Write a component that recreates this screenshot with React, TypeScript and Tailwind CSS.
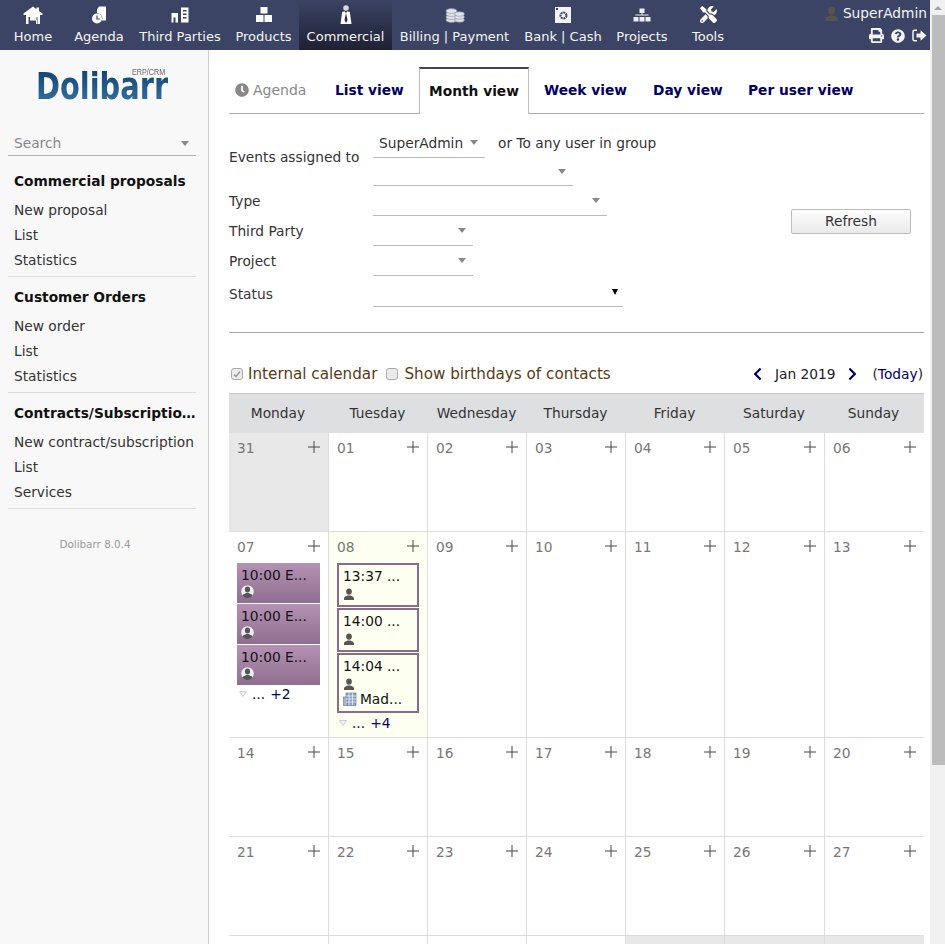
import { FaPrint, FaQuestionCircle, FaClock, FaTools, FaChevronLeft, FaChevronRight } from "react-icons/fa"

const font = { fontFamily: "'DejaVu Sans', sans-serif" }

function HomeIcon() {
  return (
    <svg width="20" height="18" viewBox="0 0 20 18" fill="#fff">
      <path d="M10 0.5 L0.5 7.5 V9 H19.5 V7.5 L16 5 V1.5 H13.5 V3.2 Z" />
      <path fillRule="evenodd" d="M3 9 H17 V18 H14.5 V11 H6 V11 H5.5 V18 H3 Z" />
      <rect x="7" y="11" width="6.5" height="3.5" />
      <rect x="13" y="14" width="1" height="4" />
    </svg>
  )
}

function AgendaIcon() {
  return (
    <svg width="16" height="18" viewBox="0 0 16 18" fill="#fff">
      <path d="M6 3.5 L8 0.5 H15 V14.5 H11 A5.5 5.5 0 0 0 6 7 Z" />
      <circle cx="6" cy="12.5" r="5" />
      <path d="M6 9.5 V13 H9" stroke="#3b4465" strokeWidth="1.2" fill="none" />
    </svg>
  )
}

function PartiesIcon() {
  return (
    <svg width="18" height="16" viewBox="0 0 18 16" fill="#fff">
      <path d="M0.5 6 H7 V15.5 H0.5 Z M2.5 10.5 V15.5 H4.5 V10.5 Z" fillRule="evenodd" />
      <path d="M10 0.5 H17.5 V15.5 H10 Z M12 3 V4.5 H15.5 V3 Z M12 6.5 V8 H15.5 V6.5 Z M12 10 V11.5 H15.5 V10 Z" fillRule="evenodd" />
    </svg>
  )
}

function ProductsIcon() {
  return (
    <svg width="18" height="17" viewBox="0 0 18 17" fill="#fff">
      <rect x="5.5" y="1" width="7" height="6.5" />
      <rect x="1" y="9" width="7.5" height="7" />
      <rect x="9.5" y="9" width="7.5" height="7" />
    </svg>
  )
}

function TieIcon() {
  return (
    <svg width="12" height="20" viewBox="0 0 12 20" fill="#fff">
      <circle cx="6" cy="3" r="2.8" fill="#d8d8d8" />
      <path d="M2.2 7 L4.5 6.2 L6 8 L7.5 6.2 L9.8 7 L11.5 19 H0.5 Z" />
      <path d="M6 8 L7.5 15 L6 18 L4.5 15 Z" fill="#2a2d45" />
    </svg>
  )
}

function CoinsIcon() {
  return (
    <svg width="20" height="16" viewBox="0 0 20 16" fill="#e2e4ea" stroke="#8a8fa5" strokeWidth="0.7">
      <ellipse cx="6.5" cy="13" rx="5.5" ry="2.4" />
      <ellipse cx="6.5" cy="10" rx="5.5" ry="2.4" />
      <ellipse cx="6.5" cy="7" rx="5.5" ry="2.4" />
      <ellipse cx="6.5" cy="4" rx="5.5" ry="2.4" />
      <ellipse cx="14.5" cy="13" rx="4.8" ry="2.2" />
      <ellipse cx="14.5" cy="10" rx="4.8" ry="2.2" />
      <ellipse cx="14.5" cy="7" rx="4.8" ry="2.2" />
    </svg>
  )
}

function SafeIcon() {
  return (
    <svg width="16" height="16" viewBox="0 0 16 16">
      <rect width="16" height="16" fill="#f2f3f7" />
      <circle cx="8.5" cy="8.5" r="3" fill="none" stroke="#3b4465" strokeWidth="2" strokeDasharray="2 0.7" />
      <rect x="1" y="1" width="2" height="2" fill="#3b4465" />
    </svg>
  )
}

function TreeIcon() {
  return (
    <svg width="18" height="14" viewBox="0 0 18 14" fill="#eceef3">
      <rect x="6.5" y="0.5" width="5" height="4.5" />
      <rect x="8.5" y="5" width="1" height="2" />
      <rect x="2.5" y="6.5" width="13" height="1" />
      <rect x="0.5" y="9" width="5" height="4.5" />
      <rect x="6.5" y="9" width="5" height="4.5" />
      <rect x="12.5" y="9" width="5" height="4.5" />
    </svg>
  )
}

function ExitIcon() {
  return (
    <svg width="15" height="13" viewBox="0 0 15 13" fill="#f4f4f4">
      <path d="M5 1.2 H2.5 A1.5 1.5 0 0 0 1 2.7 V10.3 A1.5 1.5 0 0 0 2.5 11.8 H5" fill="none" stroke="#f4f4f4" strokeWidth="1.5" />
      <path d="M4.5 4.5 H8.5 V1.2 L14.5 6.5 L8.5 11.8 V8.5 H4.5 Z" />
    </svg>
  )
}

function PersonIcon({ size = 12, color = "#555" }: { size?: number; color?: string }) {
  return (
    <svg width={size} height={size} viewBox="0 0 12 12" fill={color}>
      <ellipse cx="6" cy="3.6" rx="2.8" ry="3.2" />
      <path d="M1 12 V10.5 C1 8.8 3.5 8.2 4.6 7.6 H7.4 C8.5 8.2 11 8.8 11 10.5 V12 Z" />
    </svg>
  )
}

function PersonRound() {
  return (
    <svg width="13" height="13" viewBox="0 0 13 13">
      <circle cx="6.5" cy="6.5" r="6.3" fill="#eee" />
      <ellipse cx="6.5" cy="4.6" rx="2.6" ry="3" fill="#555" />
      <path d="M1.4 10.5 C2 9 4.4 8.6 5.2 8 H7.8 C8.6 8.6 11 9 11.6 10.5 A6.3 6.3 0 0 1 1.4 10.5 Z" fill="#555" />
    </svg>
  )
}

function BuildingIcon() {
  return (
    <svg width="14" height="14" viewBox="0 0 14 14">
      <rect x="3" y="1" width="10" height="12.5" fill="#8fa3c4" stroke="#5f7090" strokeWidth="0.6" />
      <rect x="0.5" y="5" width="4" height="8.5" fill="#a6b6d0" stroke="#5f7090" strokeWidth="0.6" />
      <path d="M3 4 H13 M3 7 H13 M3 10 H13 M6 1 V13 M9.5 1 V13" stroke="#e8edf5" strokeWidth="0.8" />
    </svg>
  )
}

function AddIcon() {
  return (
    <svg width="12" height="12" viewBox="0 0 12 12" className="-mt-[2px]">
      <path d="M6 0 V12 M0 6 H12" stroke="#444" strokeWidth="1" />
    </svg>
  )
}

function Caret({ className = "" }: { className?: string }) {
  return <span className={`block h-0 w-0 border-x-[4px] border-t-[5px] border-x-transparent border-t-[#888] ${className}`} />
}

const navItems = [
  { label: "Home", width: "w-[66px]", icon: <HomeIcon /> },
  { label: "Agenda", width: "w-[66px]", icon: <AgendaIcon /> },
  { label: "Third Parties", width: "w-[96px]", icon: <PartiesIcon /> },
  { label: "Products", width: "w-[71px]", icon: <ProductsIcon /> },
  { label: "Commercial", width: "w-[93px]", icon: <TieIcon />, active: true },
  { label: "Billing | Payment", width: "w-[125px]", icon: <CoinsIcon /> },
  { label: "Bank | Cash", width: "w-[92px]", icon: <SafeIcon /> },
  { label: "Projects", width: "w-[66px]", icon: <TreeIcon /> },
  { label: "Tools", width: "w-[66px]", icon: <FaTools className="h-[17px] w-[17px] text-white" /> },
]

function TopBar() {
  return (
    <div className="flex h-[50px] shrink-0 justify-between bg-[#3b4465]">
      <div className="flex">
        {navItems.map((item) => (
          <div
            key={item.label}
            className={`flex h-[50px] flex-col items-center ${item.width} ${
              item.active ? "bg-gradient-to-b from-[#3b4465] to-[#1f2133]" : ""
            }`}
          >
            <div className="flex h-[29px] items-center justify-center">{item.icon}</div>
            <span className="whitespace-nowrap text-[13px] leading-[15px] text-[#f4f4f4]">{item.label}</span>
          </div>
        ))}
      </div>
      <div className="flex flex-col items-end pr-[3px] pt-[4px]">
        <div className="flex items-center gap-[4px] text-[13.76px] leading-[18px] text-[#f4f4f4]">
          <PersonIcon size={15} color="#55554f" />
          <span>SuperAdmin</span>
        </div>
        <div className="mt-[6px] flex items-center gap-[7px] text-[#f4f4f4]">
          <FaPrint className="h-[15px] w-[15px]" />
          <FaQuestionCircle className="h-[14px] w-[14px]" />
          <ExitIcon />
        </div>
      </div>
    </div>
  )
}

const menus = [
  { title: "Commercial proposals", items: ["New proposal", "List", "Statistics"] },
  { title: "Customer Orders", items: ["New order", "List", "Statistics"] },
  { title: "Contracts/Subscriptions", items: ["New contract/subscription", "List", "Services"] },
]

function Sidebar() {
  return (
    <div className="w-[209px] shrink-0 border-r border-[#cfcfcf] bg-[#f8f8f8] pl-2 pr-3">
      <div className="flex h-[76px] flex-col pl-[28px] pt-[22px]">
        <div className="relative h-[30px] w-[130px]">
          <span className="absolute -top-[8px] left-0 origin-left scale-x-[0.76] whitespace-nowrap bg-gradient-to-b from-[#0f3a66] to-[#3a7aa6] bg-clip-text text-[38px] font-bold leading-[44px] text-transparent">
            Dolibarr
          </span>
          <span
            className="absolute -top-[4px] right-[1px] origin-right scale-x-[0.85] text-[8.5px] leading-[8px] text-[#666]"
            style={{ fontFamily: "'Liberation Sans', sans-serif" }}
          >
            ERP/CRM
          </span>
        </div>
      </div>
      <div className="mt-[5px] flex h-[25px] items-center justify-between border-b border-[#b5b5b5] pl-[6px] pr-[7px]">
        <span className="text-[13.76px] text-[#888]">Search</span>
        <Caret />
      </div>
      {menus.map((menu, i) => (
        <div key={menu.title} className={`border-b border-[#dcdcdc] pb-[3px] pl-[6px] ${i === 0 ? "pt-[15px]" : "pt-[10px]"}`}>
          <div className="mb-[7px] truncate text-[13.76px] font-bold leading-[20px] text-[#111]">{menu.title}</div>
          {menu.items.map((item) => (
            <div key={item} className="h-[25px] whitespace-nowrap text-[13.76px] leading-[25px] text-[#333]">
              {item}
            </div>
          ))}
        </div>
      ))}
      <div className="mt-[28px] pr-[14px] text-center text-[10.4px] text-[#999]">Dolibarr 8.0.4</div>
    </div>
  )
}

function Tabs() {
  return (
    <div className="flex h-[47px] items-end border-b border-[#aaa] text-[13.76px] font-bold text-[#000066]">
      <div className="flex h-[46px] w-[106px] items-center gap-[4px] pl-[6px] text-[14px] font-normal text-[#888]">
        <FaClock className="h-[14px] w-[14px]" />
        <span>Agenda</span>
      </div>
      <div className="flex h-[46px] w-[84px] items-center">List view</div>
      <div className="-mb-px flex h-[47px] w-[110px] items-center justify-center border-x border-t-2 border-x-[#bbb] border-t-[#3b4465] bg-white text-[#111]">
        Month view
      </div>
      <div className="flex h-[46px] w-[111px] items-center pl-[15px]">Week view</div>
      <div className="flex h-[46px] w-[95px] items-center pl-[13px]">Day view</div>
      <div className="flex h-[46px] flex-1 items-center pl-[13px]">Per user view</div>
    </div>
  )
}

function Select({ width, text, height = "h-[30px]" }: { width: string; text?: string; height?: string }) {
  return (
    <div className={`flex items-center justify-between border-b border-[#bbb] pl-[6px] pr-[7px] ${height} ${width}`}>
      <span className="pt-px text-[13.76px] text-[#333]">{text}</span>
      <Caret />
    </div>
  )
}

function FilterForm() {
  return (
    <div className="flex border-b border-[#aaa] pb-[25px] text-[13.76px] text-[#333]">
      <div className="w-[562px]">
        <div className="flex">
          <span className="w-[144px] pt-[33px] leading-[20px]">Events assigned to</span>
          <div>
            <div className="flex h-[44px] items-end">
              <Select width="w-[112px]" text="SuperAdmin" />
              <span className="ml-[13px] self-end pb-[5px] leading-[20px]">or To any user in group</span>
            </div>
            <Select width="w-[200px]" height="h-[28px]" />
          </div>
        </div>
        <div className="flex items-center">
          <span className="w-[144px]">Type</span>
          <Select width="w-[234px]" />
        </div>
        <div className="flex items-center">
          <span className="w-[144px]">Third Party</span>
          <Select width="w-[100px]" />
        </div>
        <div className="flex items-center">
          <span className="w-[144px]">Project</span>
          <Select width="w-[100px]" />
        </div>
        <div className="flex h-[31px] items-center">
          <span className="w-[144px] pt-[6px]">Status</span>
          <div className="flex h-[31px] w-[250px] justify-end border-b border-[#bbb] pr-[5px] pt-[13px]">
            <span className="block h-0 w-0 border-x-[3px] border-t-[6px] border-x-transparent border-t-black" />
          </div>
        </div>
      </div>
      <div className="pt-[95px]">
        <button
          type="button"
          className="h-[25px] w-[120px] rounded-[2px] border border-[#bbb] bg-gradient-to-b from-[#fdfdfd] to-[#eaeaea] text-[13.76px] text-[#333]"
        >
          Refresh
        </button>
      </div>
    </div>
  )
}

function Check({ checked = false }: { checked?: boolean }) {
  return (
    <span className="flex h-[12px] w-[12px] shrink-0 items-center justify-center rounded-[3px] border border-[#aaa] bg-[#ececec]">
      {checked && (
        <svg width="8" height="8" viewBox="0 0 8 8">
          <path d="M1 4.5 L3 6.5 L7 1.5" stroke="#999" strokeWidth="1.5" fill="none" />
        </svg>
      )}
    </span>
  )
}

function CalendarHead() {
  return (
    <div className="flex h-[60px] items-end justify-between pb-[9px]">
      <div className="flex items-center pl-[2px] text-[15.2px] leading-[20px] text-[#5c3a15]">
        <Check checked />
        <span className="ml-[5px] mr-[9px]">Internal calendar</span>
        <Check />
        <span className="ml-[6px]">Show birthdays of contacts</span>
      </div>
      <div className="flex items-center pr-px text-[13.76px] leading-[20px] text-[#222]">
        <FaChevronLeft className="h-[14px] w-[11px] text-[#000066]" />
        <span className="mx-[12px]">Jan 2019</span>
        <FaChevronRight className="h-[14px] w-[11px] text-[#000066]" />
        <span className="ml-[14px]">
          (<span className="text-[#000066]">Today</span>)
        </span>
      </div>
    </div>
  )
}

const days = ["Monday", "Tuesday", "Wednesday", "Thursday", "Friday", "Saturday", "Sunday"]

function EventFilled() {
  return (
    <div className="mb-px flex h-[40px] flex-col bg-gradient-to-b from-[#b592b5] to-[#8f6f8f] pl-[4px] pt-[2px] text-[13.76px] leading-[20px] text-[#111]">
      <span>10:00 E...</span>
      <PersonRound />
    </div>
  )
}

function EventBox({ time, company }: { time: string; company?: boolean }) {
  return (
    <div
      className={`mb-px flex flex-col border-2 border-[#8b6b8b] pl-[4px] pt-[2px] text-[13.76px] leading-[19px] text-[#111] ${
        company ? "h-[60px]" : "h-[44px]"
      }`}
    >
      <span>{time}</span>
      <div className="h-[18px] pt-[2px]">
        <PersonIcon size={12} />
      </div>
      {company && (
        <div className="-mt-[3px] flex items-center gap-[3px] leading-[16px]">
          <BuildingIcon />
          <span>Mad...</span>
        </div>
      )}
    </div>
  )
}

function More({ count, className = "" }: { count: number; className?: string }) {
  return (
    <div className={`flex items-center gap-[5px] pl-[2px] text-[13.76px] leading-[18px] text-[#000066] ${className}`}>
      <svg width="8" height="6" viewBox="0 0 8 6">
        <path d="M0.5 0.5 H7.5 L4 5.5 Z" fill="#f4f4f4" stroke="#ccc" strokeWidth="1" />
      </svg>
      <span>...</span>
      <span>+{count}</span>
    </div>
  )
}

interface DayCell {
  day: string
  out?: boolean
  today?: boolean
  content?: React.ReactNode
}

function Cell({ cell, last }: { cell: DayCell; last: boolean }) {
  return (
    <div
      className={`border-b border-[#ddd] ${last ? "" : "border-r"} ${
        cell.out ? "bg-[#e8e8e8]" : cell.today ? "bg-[#fdfff0]" : "bg-white"
      }`}
    >
      <div className="flex h-[30px] items-center justify-between pl-[8px] pr-[8px] text-[13.76px] text-[#777]">
        <span>{cell.day}</span>
        <AddIcon />
      </div>
      {cell.content && <div className="pl-[8px] pr-[8px] pt-px">{cell.content}</div>}
    </div>
  )
}

const rows: { labels: string[]; height: string; extra?: Record<number, Partial<DayCell>> }[] = [
  { labels: ["31", "01", "02", "03", "04", "05", "06"], height: "h-[99px]", extra: { 0: { out: true } } },
  {
    labels: ["07", "08", "09", "10", "11", "12", "13"],
    height: "h-[206px]",
    extra: {
      0: {
        content: (
          <>
            <EventFilled />
            <EventFilled />
            <EventFilled />
            <More count={2} className="-mt-px" />
          </>
        ),
      },
      1: {
        today: true,
        content: (
          <>
            <EventBox time="13:37 ..." />
            <EventBox time="14:00 ..." />
            <EventBox time="14:04 ..." company />
            <More count={4} />
          </>
        ),
      },
    },
  },
  { labels: ["14", "15", "16", "17", "18", "19", "20"], height: "h-[99px]" },
  { labels: ["21", "22", "23", "24", "25", "26", "27"], height: "h-[99px]" },
  {
    labels: ["", "", "", "", "", "", ""],
    height: "h-[99px]",
    extra: { 4: { out: true }, 5: { out: true }, 6: { out: true } },
  },
]

const gridCols = "grid grid-cols-[100px_99px_99px_99px_99px_100px_99px]"

function Calendar() {
  return (
    <div>
      <div className={`${gridCols} h-[40px] items-center border-t border-[#c8c8c8] bg-[#dedfe1] text-center text-[13.76px] text-[#333]`}>
        {days.map((d) => (
          <span key={d} className="pr-[2px]">
            {d}
          </span>
        ))}
      </div>
      {rows.map((row, r) => (
        <div key={r} className={`${gridCols} ${row.height}`}>
          {row.labels.map((label, i) => (
            <Cell key={i} cell={{ day: label, ...row.extra?.[i] }} last={i === 6} />
          ))}
        </div>
      ))}
    </div>
  )
}

function Scrollbar() {
  return (
    <div className="flex w-[15px] shrink-0 flex-col items-center bg-[#f1f1f1] pl-px">
      <div className="flex h-[15px] items-center justify-center">
        <span className="block h-0 w-0 border-x-[4px] border-b-[4px] border-x-transparent border-b-[#a3a3a3]" />
      </div>
      <div className="h-[750px] w-[13px] bg-[#bcbcbc]" />
    </div>
  )
}

export default function App() {
  return (
    <div className="flex h-[944px] w-[945px] overflow-hidden bg-white" style={font}>
      <div className="flex w-[930px] shrink-0 flex-col">
        <TopBar />
        <div className="flex min-h-0 flex-1">
          <Sidebar />
          <div className="w-[721px] pl-[20px] pr-[6px] pt-[17px]">
            <Tabs />
            <FilterForm />
            <CalendarHead />
            <Calendar />
          </div>
        </div>
      </div>
      <Scrollbar />
    </div>
  )
}
